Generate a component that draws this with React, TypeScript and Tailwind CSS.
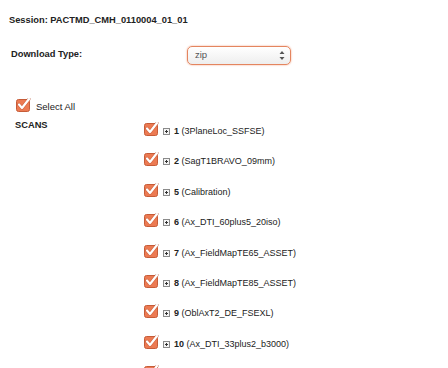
import React from "react";

const scans = [
  { id: "1", name: "3PlaneLoc_SSFSE" },
  { id: "2", name: "SagT1BRAVO_09mm" },
  { id: "5", name: "Calibration" },
  { id: "6", name: "Ax_DTI_60plus5_20iso" },
  { id: "7", name: "Ax_FieldMapTE65_ASSET" },
  { id: "8", name: "Ax_FieldMapTE85_ASSET" },
  { id: "9", name: "OblAxT2_DE_FSEXL" },
  { id: "10", name: "Ax_DTI_33plus2_b3000" },
];

const CheckBox = () => (
  <svg width="15" height="14" viewBox="0 0 15 14" className="shrink-0">
    <rect x="0.5" y="1.5" width="13" height="12" rx="2" fill="#ec7a52" stroke="#c65c38" />
    <path d="M3 6.5 L6 10 L13 1" fill="none" stroke="#b04a2a" strokeWidth="3.4" strokeLinecap="round" strokeLinejoin="round" opacity="0.5" />
    <path d="M3 6.5 L6 10 L13 1" fill="none" stroke="#ffffff" strokeWidth="2.2" strokeLinecap="round" strokeLinejoin="round" />
  </svg>
);

const Expand = () => (
  <svg width="7" height="7" viewBox="0 0 7 7" className="shrink-0 mb-[1px]">
    <rect x="0.5" y="0.5" width="6" height="6" fill="#f4f4f4" stroke="#8a8a8a" />
    <path d="M2 3.5 H5 M3.5 2 V5" stroke="#333" strokeWidth="1" />
  </svg>
);

export default function App() {
  return (
    <div className="w-[448px] h-[368px] overflow-hidden bg-white text-[#222] font-['Liberation_Sans',Arial,sans-serif]">
      <div className="pl-[9px] pt-[14px] text-[9.3px] font-bold">Session: PACTMD_CMH_0110004_01_01</div>

      <div className="flex items-center pl-[11px] mt-[18px]">
        <div className="w-[176px] text-[9.3px] font-bold">Download Type:</div>
        <div className="flex h-[19px] w-[104px] items-center justify-between rounded-[5px] border border-[#e4855f] bg-gradient-to-b from-white to-[#eeeeee] pl-[7px] pr-[5px] shadow-[0_0_2px_#f0a080]">
          <span className="text-[9.5px] text-[#555]">zip</span>
          <svg width="6" height="11" viewBox="0 0 6 11">
            <path d="M3 1 L5.5 4 H0.5 Z M3 10 L5.5 7 H0.5 Z" fill="#555" />
          </svg>
        </div>
      </div>

      <div className="flex items-end gap-[5px] pl-[16px] mt-[33px]">
        <CheckBox />
        <span className="text-[9.5px] leading-none">Select All</span>
      </div>

      <div className="flex mt-[7px]">
        <div className="w-[144px] pl-[15px] text-[9.3px] font-bold">SCANS</div>
        <div className="flex flex-col gap-[16.4px] pt-[3px]">
          {scans.map((s, i) => (
            <div key={i} className="flex items-end gap-[4px] h-[14px]">
              <CheckBox />
              <Expand />
              <span className="text-[9px] leading-none">
                <b>{s.id}</b> ({s.name})
              </span>
            </div>
          ))}
          <div className="flex h-[14px]">
            <CheckBox />
          </div>
        </div>
      </div>
    </div>
  );
}
